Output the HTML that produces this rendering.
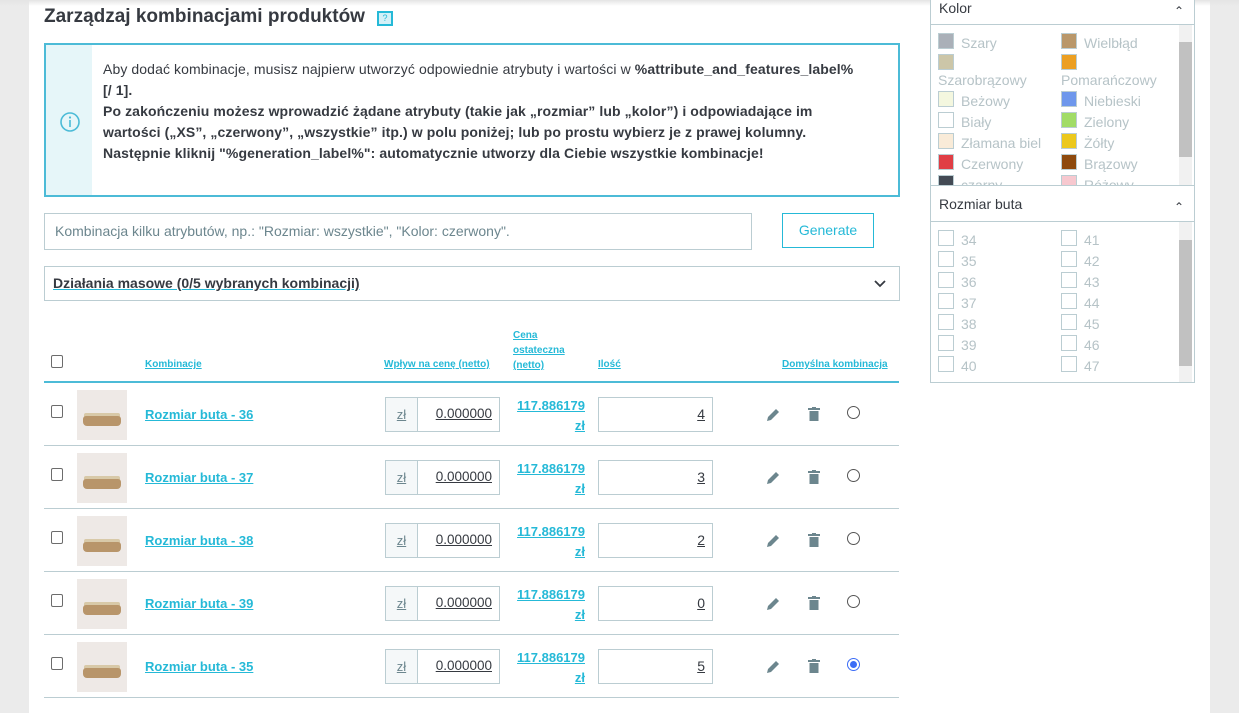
<!DOCTYPE html>
<html><head><meta charset="utf-8"><style>
*{box-sizing:border-box;margin:0;padding:0}
body{width:1239px;height:713px;overflow:hidden;background:#ebebeb;font-family:"Liberation Sans",sans-serif;position:relative;color:#363a41}
.main{position:absolute;left:29px;top:0;width:1181px;height:713px;background:#fff}
.shadow{position:absolute;left:0;top:0;width:1239px;height:6px;background:linear-gradient(#e4e4e4,rgba(255,255,255,0))}
.a{position:absolute}
h2{position:absolute;left:44px;top:6px;font-size:19px;font-weight:bold;color:#363a41;white-space:nowrap}
.q{position:absolute;left:377px;top:11px;width:16px;height:15px;border:2px solid #25b9d7;background:#d4f0f7;color:#25b9d7;font-size:9px;text-align:center;line-height:11px}
.info{left:44px;top:43px;width:856px;height:154px;border:2px solid #4cbbd7}
.info .strip{position:absolute;left:0;top:0;width:46px;height:100%;background:#e6f6f9}
.info p{position:absolute;left:57px;top:14px;font-size:14px;line-height:21px;white-space:nowrap;letter-spacing:0.1px}
.inp{left:44px;top:213px;width:708px;height:37px;border:1px solid #bbcdd2;font-size:14px;color:#6c868e;padding:9px 10px}
.gen{left:782px;top:213px;width:92px;height:35px;border:1px solid #25b9d7;color:#25b9d7;font-size:14px;text-align:center;line-height:33px}
.mass{left:44px;top:266px;width:856px;height:35px;border:1px solid #bbcdd2;font-size:14px;font-weight:bold;padding:8px 8px;text-decoration:underline;text-decoration-color:#25b9d7}
.th{position:absolute;font-size:10px;font-weight:bold;color:#25b9d7;text-decoration:underline;line-height:15px}
.cb{position:absolute;width:12px;height:13px;border:1px solid #6c6c6c;border-radius:2px;background:#fff}
.row{position:absolute;left:44px;width:855px;height:63px;border-bottom:1px solid #bbcdd2}
.img{position:absolute;left:33px;top:7px;width:50px;height:50px;background:#eee9e6}
.img:after{content:"";position:absolute;left:6px;top:26px;width:38px;height:10px;background:#b8956a;border-radius:3px 3px 4px 4px;box-shadow:0 -4px 0 -1px #d8c9a8}
.lnk{position:absolute;left:101px;top:24px;font-size:13px;font-weight:bold;color:#25b9d7;text-decoration:underline}
.pg{position:absolute;left:341px;top:14px;width:115px;height:35px;border:1px solid #bbcdd2}
.pg .z{position:absolute;left:0;top:0;width:32px;height:33px;background:#f5f8f9;border-right:1px solid #bbcdd2;font-size:13px;text-align:center;line-height:33px;text-decoration:underline;color:#6c868e}
.pg .v{position:absolute;right:7px;top:8px;font-size:13.5px;text-decoration:underline}
.fp{position:absolute;left:470px;top:13px;font-size:13px;font-weight:bold;color:#25b9d7;text-decoration:underline;text-align:right;line-height:20px;width:71px}
.qty{position:absolute;left:554px;top:14px;width:115px;height:35px;border:1px solid #bbcdd2;font-size:14px;text-align:right;padding:8px 7px;text-decoration:underline}
.ic{position:absolute;top:24px}
.rad{position:absolute;left:803px;top:23px;width:13px;height:13px;border:1px solid #555;border-radius:50%}
.rad.on{border:1.5px solid #3b6cf6}
.rad.on:after{content:"";position:absolute;left:2px;top:2px;width:7px;height:7px;border-radius:50%;background:#3b6cf6}
.panel{position:absolute;left:930px;width:265px;border:1px solid #bbcdd2;background:#fff}
.ph{font-size:14px;color:#363a41;padding:0 8px;position:relative}
.ph:after{content:"⌃";position:absolute;right:10px;top:3px;font-size:12px}
.list{position:absolute;left:930px;width:265px;border:1px solid #bbcdd2;overflow:hidden;background:#fff}
.it{position:absolute;font-size:14px;color:#b6c3c7;white-space:nowrap}
.sw{position:absolute;width:16px;height:16px;border:1px solid #bbcdd2}
.sb{position:absolute;right:2px;width:13px;background:#f1f1f1}
.sb i{position:absolute;left:0;width:13px;background:#c1c1c1}
</style></head><body>
<div class="main"></div>
<div class="shadow"></div>

<h2>Zarządzaj kombinacjami produktów</h2>
<div class="q">?</div>

<div class="a info"><div class="strip"></div>
<svg class="a" style="left:13px;top:66px" width="22" height="22" viewBox="0 0 22 22"><circle cx="11" cy="11" r="9" fill="none" stroke="#4cbbd7" stroke-width="1.6"/><circle cx="11" cy="6.5" r="1.1" fill="#4cbbd7"/><rect x="10.2" y="9" width="1.6" height="7" fill="#4cbbd7"/></svg>
<p>Aby dodać kombinacje, musisz najpierw utworzyć odpowiednie atrybuty i wartości w <b>%attribute_and_features_label%</b><br><b>[/ 1].</b><br><b>Po zakończeniu możesz wprowadzić żądane atrybuty (takie jak „rozmiar” lub „kolor”) i odpowiadające im</b><br><b>wartości („XS”, „czerwony”, „wszystkie” itp.) w polu poniżej; lub po prostu wybierz je z prawej kolumny.</b><br><b>Następnie kliknij "%generation_label%": automatycznie utworzy dla Ciebie wszystkie kombinacje!</b></p></div>

<div class="a inp">Kombinacja kilku atrybutów, np.: "Rozmiar: wszystkie", "Kolor: czerwony".</div>
<div class="a gen">Generate</div>
<div class="a mass">Działania masowe (0/5 wybranych kombinacji)</div>
<svg class="a" style="left:873px;top:279px" width="14" height="10" viewBox="0 0 14 10"><path d="M2 2l5 5 5-5" fill="none" stroke="#363a41" stroke-width="1.8"/></svg>

<div class="cb" style="left:51px;top:355px"></div>
<div class="th" style="left:145px;top:357px">Kombinacje</div>
<div class="th" style="left:384px;top:357px">Wpływ na cenę (netto)</div>
<div class="th" style="left:513px;top:328px">Cena<br>ostateczna<br>(netto)</div>
<div class="th" style="left:598px;top:357px">Ilość</div>
<div class="th" style="left:782px;top:357px">Domyślna kombinacja</div>
<div class="a" style="left:44px;top:381px;width:855px;height:2px;background:#4cbbd7"></div>

<div class="row" style="top:383px"><div class="cb" style="left:7px;top:22px"></div><div class="img"></div><div class="lnk">Rozmiar buta - 36</div><div class="pg"><div class="z">zł</div><div class="v">0.000000</div></div><div class="fp">117.886179<br>zł</div><div class="qty">4</div>
<svg class="ic" style="left:721px" width="16" height="16" viewBox="0 0 16 16"><path d="M2 14l1-4 8-8 3 3-8 8z" fill="#6c868e"/></svg><svg class="ic" style="left:764px" width="12" height="15" viewBox="0 0 12 15"><rect x="0" y="1" width="12" height="2" fill="#6c868e"/><rect x="4" y="0" width="4" height="2" fill="#6c868e"/><rect x="1.5" y="4" width="9" height="10" fill="#6c868e"/></svg><div class="rad"></div></div>

<div class="row" style="top:446px"><div class="cb" style="left:7px;top:22px"></div><div class="img"></div><div class="lnk">Rozmiar buta - 37</div><div class="pg"><div class="z">zł</div><div class="v">0.000000</div></div><div class="fp">117.886179<br>zł</div><div class="qty">3</div>
<svg class="ic" style="left:721px" width="16" height="16" viewBox="0 0 16 16"><path d="M2 14l1-4 8-8 3 3-8 8z" fill="#6c868e"/></svg><svg class="ic" style="left:764px" width="12" height="15" viewBox="0 0 12 15"><rect x="0" y="1" width="12" height="2" fill="#6c868e"/><rect x="4" y="0" width="4" height="2" fill="#6c868e"/><rect x="1.5" y="4" width="9" height="10" fill="#6c868e"/></svg><div class="rad"></div></div>

<div class="row" style="top:509px"><div class="cb" style="left:7px;top:22px"></div><div class="img"></div><div class="lnk">Rozmiar buta - 38</div><div class="pg"><div class="z">zł</div><div class="v">0.000000</div></div><div class="fp">117.886179<br>zł</div><div class="qty">2</div>
<svg class="ic" style="left:721px" width="16" height="16" viewBox="0 0 16 16"><path d="M2 14l1-4 8-8 3 3-8 8z" fill="#6c868e"/></svg><svg class="ic" style="left:764px" width="12" height="15" viewBox="0 0 12 15"><rect x="0" y="1" width="12" height="2" fill="#6c868e"/><rect x="4" y="0" width="4" height="2" fill="#6c868e"/><rect x="1.5" y="4" width="9" height="10" fill="#6c868e"/></svg><div class="rad"></div></div>

<div class="row" style="top:572px"><div class="cb" style="left:7px;top:22px"></div><div class="img"></div><div class="lnk">Rozmiar buta - 39</div><div class="pg"><div class="z">zł</div><div class="v">0.000000</div></div><div class="fp">117.886179<br>zł</div><div class="qty">0</div>
<svg class="ic" style="left:721px" width="16" height="16" viewBox="0 0 16 16"><path d="M2 14l1-4 8-8 3 3-8 8z" fill="#6c868e"/></svg><svg class="ic" style="left:764px" width="12" height="15" viewBox="0 0 12 15"><rect x="0" y="1" width="12" height="2" fill="#6c868e"/><rect x="4" y="0" width="4" height="2" fill="#6c868e"/><rect x="1.5" y="4" width="9" height="10" fill="#6c868e"/></svg><div class="rad"></div></div>

<div class="row" style="top:635px"><div class="cb" style="left:7px;top:22px"></div><div class="img"></div><div class="lnk">Rozmiar buta - 35</div><div class="pg"><div class="z">zł</div><div class="v">0.000000</div></div><div class="fp">117.886179<br>zł</div><div class="qty">5</div>
<svg class="ic" style="left:721px" width="16" height="16" viewBox="0 0 16 16"><path d="M2 14l1-4 8-8 3 3-8 8z" fill="#6c868e"/></svg><svg class="ic" style="left:764px" width="12" height="15" viewBox="0 0 12 15"><rect x="0" y="1" width="12" height="2" fill="#6c868e"/><rect x="4" y="0" width="4" height="2" fill="#6c868e"/><rect x="1.5" y="4" width="9" height="10" fill="#6c868e"/></svg><div class="rad on"></div></div>

<div class="panel" style="top:-4px;height:29px"><div class="ph" style="line-height:22px">Kolor</div></div>
<div class="list" style="top:24px;height:162px">
 <div class="sw" style="left:7px;top:8px;background:#aab0b8"></div><div class="it" style="left:30px;top:10px">Szary</div>
 <div class="sw" style="left:130px;top:8px;background:#b9976a"></div><div class="it" style="left:153px;top:10px">Wielbłąd</div>
 <div class="sw" style="left:7px;top:29px;background:#ccc6a8"></div><div class="sw" style="left:130px;top:29px;background:#ec9f22"></div>
 <div class="it" style="left:7px;top:47px">Szarobrązowy</div><div class="it" style="left:130px;top:47px">Pomarańczowy</div>
 <div class="sw" style="left:7px;top:66px;background:#f4f7df"></div><div class="it" style="left:30px;top:68px">Beżowy</div>
 <div class="sw" style="left:130px;top:66px;background:#6e97ec"></div><div class="it" style="left:153px;top:68px">Niebieski</div>
 <div class="sw" style="left:7px;top:87px;background:#fff"></div><div class="it" style="left:30px;top:89px">Biały</div>
 <div class="sw" style="left:130px;top:87px;background:#a1dc66"></div><div class="it" style="left:153px;top:89px">Zielony</div>
 <div class="sw" style="left:7px;top:108px;background:#f9ebd8"></div><div class="it" style="left:30px;top:110px">Złamana biel</div>
 <div class="sw" style="left:130px;top:108px;background:#ecc81c"></div><div class="it" style="left:153px;top:110px">Żółty</div>
 <div class="sw" style="left:7px;top:129px;background:#e03e45"></div><div class="it" style="left:30px;top:131px">Czerwony</div>
 <div class="sw" style="left:130px;top:129px;background:#8e4a0e"></div><div class="it" style="left:153px;top:131px">Brązowy</div>
 <div class="sw" style="left:7px;top:150px;background:#434a54"></div><div class="it" style="left:30px;top:152px">czarny</div>
 <div class="sw" style="left:130px;top:150px;background:#f7c8cf"></div><div class="it" style="left:153px;top:152px">Różowy</div>
 <div class="sb" style="top:0;height:160px"><i style="top:17px;height:115px"></i></div>
</div>
<div class="panel" style="top:185px;height:37px"><div class="ph" style="line-height:36px">Rozmiar buta</div></div>
<div class="list" style="top:221px;height:162px">
 <div class="sw" style="left:7px;top:8px"></div><div class="it" style="left:30px;top:10px">34</div><div class="sw" style="left:130px;top:8px"></div><div class="it" style="left:153px;top:10px">41</div>
 <div class="sw" style="left:7px;top:29px"></div><div class="it" style="left:30px;top:31px">35</div><div class="sw" style="left:130px;top:29px"></div><div class="it" style="left:153px;top:31px">42</div>
 <div class="sw" style="left:7px;top:50px"></div><div class="it" style="left:30px;top:52px">36</div><div class="sw" style="left:130px;top:50px"></div><div class="it" style="left:153px;top:52px">43</div>
 <div class="sw" style="left:7px;top:71px"></div><div class="it" style="left:30px;top:73px">37</div><div class="sw" style="left:130px;top:71px"></div><div class="it" style="left:153px;top:73px">44</div>
 <div class="sw" style="left:7px;top:92px"></div><div class="it" style="left:30px;top:94px">38</div><div class="sw" style="left:130px;top:92px"></div><div class="it" style="left:153px;top:94px">45</div>
 <div class="sw" style="left:7px;top:113px"></div><div class="it" style="left:30px;top:115px">39</div><div class="sw" style="left:130px;top:113px"></div><div class="it" style="left:153px;top:115px">46</div>
 <div class="sw" style="left:7px;top:134px"></div><div class="it" style="left:30px;top:136px">40</div><div class="sw" style="left:130px;top:134px"></div><div class="it" style="left:153px;top:136px">47</div>
 <div class="sb" style="top:0;height:160px"><i style="top:18px;height:126px"></i></div>
</div>
</body></html>
